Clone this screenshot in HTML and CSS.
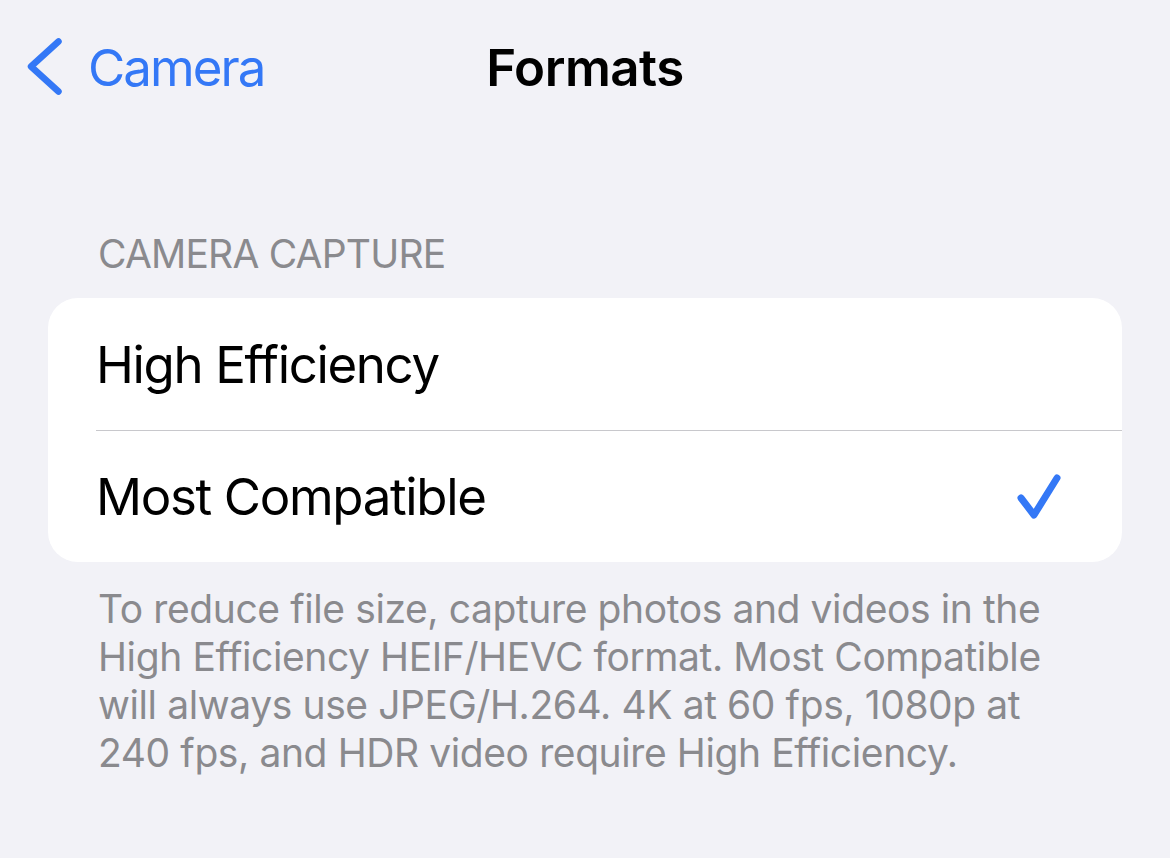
FILE: index.html
```html
<!DOCTYPE html>
<html lang="en">
<head>
<meta charset="utf-8">
<title>Formats</title>
<link rel="stylesheet" href="styles.css">
</head>
<body>
<header class="nav">
  <a class="back" href="#">
    <svg class="chev" width="40" height="58" viewBox="0 0 40 58" aria-hidden="true">
      <path d="M34.5 3.5 L7 28.5 L34.5 53.5" fill="none" stroke="#3478f6" stroke-width="6.5" stroke-linecap="round" stroke-linejoin="round"/>
    </svg>
    <span>Camera</span>
  </a>
  <h1 class="title">Formats</h1>
  <div class="spacer"></div>
</header>

<section class="section">
  <h2 class="section-header">CAMERA CAPTURE</h2>
  <div class="card">
    <div class="row">
      <span class="label">High Efficiency</span>
    </div>
    <div class="row">
      <span class="label">Most Compatible</span>
      <svg class="check" width="54" height="54" viewBox="0 0 54 54" aria-hidden="true">
        <path d="M9 28 L22 45 L45 8" fill="none" stroke="#3478f6" stroke-width="7" stroke-linecap="round" stroke-linejoin="round"/>
      </svg>
    </div>
  </div>
  <p class="footer">To reduce file size, capture photos and videos in the<br>High Efficiency HEIF/HEVC format. Most Compatible<br>will always use JPEG/H.264. 4K at 60 fps, 1080p at<br>240 fps, and HDR video require High Efficiency.</p>
</section>
</body>
</html>
```

FILE: styles.css
```css
* { box-sizing: border-box; }

html, body {
  margin: 0;
  padding: 0;
  background: #f2f2f7;
  font-family: "Inter", "Liberation Sans", sans-serif;
  color: #000;
}

.nav {
  height: 134px;
  display: grid;
  grid-template-columns: 1fr auto 1fr;
  align-items: center;
}

.back {
  display: flex;
  align-items: center;
  gap: 24px;
  padding-left: 24px;
  color: #3478f6;
  text-decoration: none;
  font-size: 51px;
  letter-spacing: -1.95px;
}

.chev { display: block; }

.title {
  margin: 0;
  font-size: 51px;
  font-weight: 600;
  letter-spacing: -0.5px;
}

.section {
  padding: 0 48px;
}

.section-header {
  margin: 96px 0 20px 50px;
  font-size: 39px;
  line-height: 48px;
  font-weight: 400;
  color: #8a8a8e;
  letter-spacing: -0.8px;
}

.card {
  background: #fff;
  border-radius: 30px;
  overflow: hidden;
}

.row {
  height: 132px;
  margin-left: 48px;
  padding-right: 48px;
  display: flex;
  align-items: center;
  justify-content: space-between;
}

.row + .row {
  border-top: 1px solid #c8c8cc;
}

.label {
  font-size: 51px;
  letter-spacing: -1.35px;
}

.check {
  display: block;
  margin-right: 8px;
}

.footer {
  margin: 23px 0 0 50px;
  font-size: 39px;
  line-height: 48px;
  color: #8a8a8e;
  letter-spacing: -0.4px;
}
```
